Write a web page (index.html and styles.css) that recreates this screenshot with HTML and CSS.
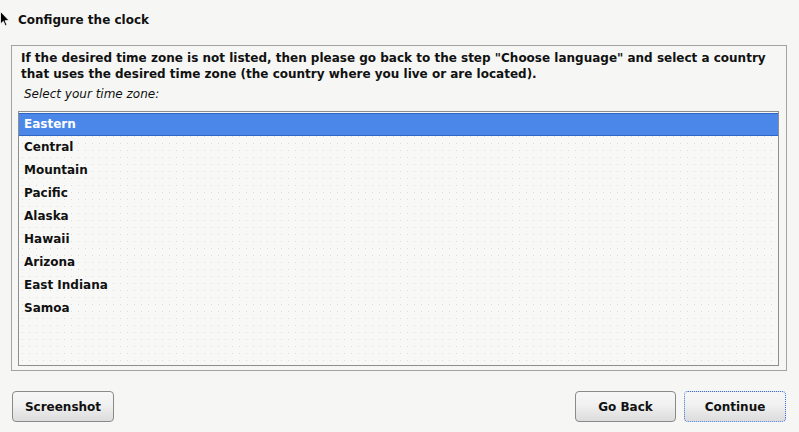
FILE: index.html
```html
<!DOCTYPE html>
<html>
<head>
<meta charset="utf-8">
<link rel="stylesheet" href="styles.css">
</head>
<body>
<div class="page">
  <header class="header">
    <svg class="cursor" width="10" height="16" viewBox="0 0 10 16"><path d="M0.5 0.5 L0.5 13 L3.3 10.3 L5.3 14.8 L7 14 L5 9.7 L9 9.5 Z" fill="#000" stroke="#fff" stroke-width="0.8"/></svg>
    <h1 class="title">Configure the clock</h1>
  </header>
  <section class="frame">
    <p class="intro">If the desired time zone is not listed, then please go back to the step "Choose language" and select a country that uses the desired time zone (the country where you live or are located).</p>
    <p class="label">Select your time zone:</p>
    <ul class="list">
      <li class="item selected">Eastern</li>
      <li class="item">Central</li>
      <li class="item">Mountain</li>
      <li class="item">Pacific</li>
      <li class="item">Alaska</li>
      <li class="item">Hawaii</li>
      <li class="item">Arizona</li>
      <li class="item">East Indiana</li>
      <li class="item">Samoa</li>
    </ul>
  </section>
  <footer class="footer">
    <button class="btn btn-shot">Screenshot</button>
    <div class="spacer"></div>
    <button class="btn">Go Back</button>
    <button class="btn focused">Continue</button>
  </footer>
</div>
</body>
</html>
```
FILE: styles.css
```css
html, body {
  margin: 0;
  padding: 0;
  background: #f6f7f5;
}
body {
  font-family: "DejaVu Sans", sans-serif;
  font-size: 12px;
  color: #111;
  width: 799px;
  height: 432px;
  overflow: hidden;
}
.page {
  display: flex;
  flex-direction: column;
  height: 432px;
}
.header {
  position: relative;
  height: 45px;
  display: flex;
  align-items: flex-start;
}
.cursor {
  position: absolute;
  left: 0;
  top: 11px;
}
.title {
  margin: 12px 0 0 18px;
  font-size: 12px;
  font-weight: bold;
  line-height: 16px;
}
.frame {
  margin: 0 12px 0 11px;
  height: 326px;
  box-sizing: border-box;
  border: 1px solid #a3a3a3;
  padding: 4px 7px 4px 6px;
  display: flex;
  flex-direction: column;
}
.intro {
  margin: 0 0 0 3px;
  font-weight: bold;
  line-height: 16px;
}
.label {
  margin: 4px 0 0 6px;
  font-style: italic;
  line-height: 16px;
  height: 25px;
}
.list {
  list-style: none;
  margin: 0;
  padding: 1px 0 0;
  flex: 1;
  border: 1px solid #8e8e8e;
  background-color: #f8f9f7;
  background-image: radial-gradient(circle, #dcdedb 0.6px, transparent 0.9px);
  background-size: 7px 7px;
}
.item {
  height: 23px;
  line-height: 23px;
  padding-left: 5px;
  font-weight: bold;
  box-sizing: border-box;
}
.item.selected {
  background: #4a87e8;
  color: #fff;
  border-top: 1px solid #2f66c4;
  border-bottom: 1px solid #2f66c4;
  line-height: 21px;
}
.footer {
  display: flex;
  padding: 20px 13px 0 12px;
  gap: 8px;
}
.spacer { flex: 1; }
.btn {
  width: 101px;
  height: 31px;
  font-family: "DejaVu Sans", sans-serif;
  font-size: 12px;
  font-weight: bold;
  color: #111;
  border: 1px solid #8a8a8a;
  border-radius: 4px;
  background: linear-gradient(#f7f7f7 0%, #f0f0f0 45%, #dcdcdc 100%);
  padding: 0;
}
.btn-shot { width: 102px; }
.btn.focused {
  width: 102px;
  border: 1px dotted #3b6fd6;
}
```
